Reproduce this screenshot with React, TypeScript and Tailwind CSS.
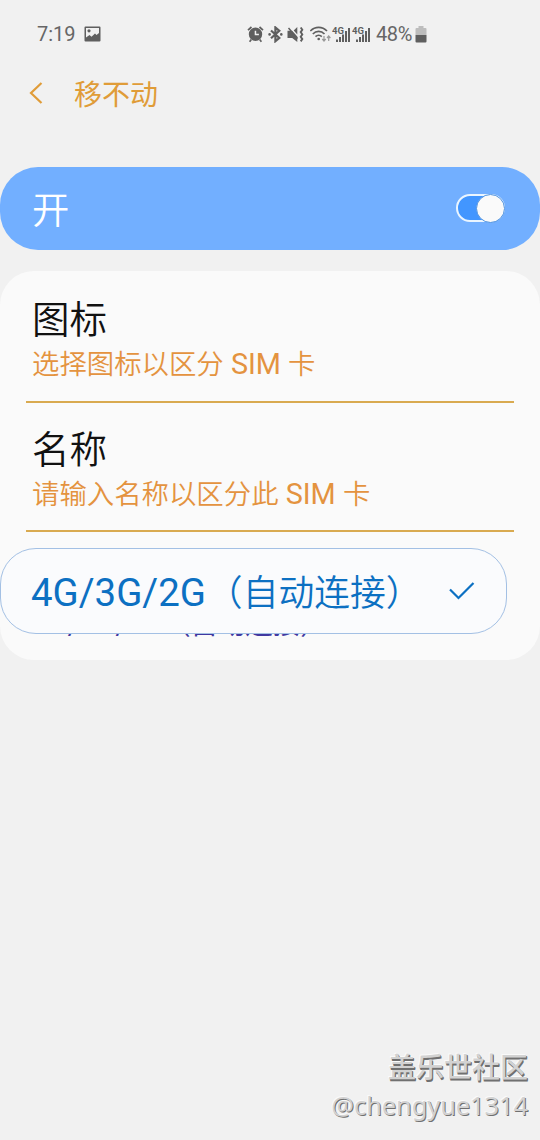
import React from "react";

function PictureIcon() {
  return (
    <svg className="block h-[16px] w-[17px]" viewBox="0 0 17 16">
      <path fill="#5f5f5f" fillRule="evenodd" d="M1.500 .5h14a1 1 0 0 1 1 1v13a1 1 0 0 1-1 1h-14a1 1 0 0 1-1-1v-13a1 1 0 0 1 1-1zM2 2v9.500l3.500-2.500 2 1.800L11 7.500l1.500 1.500L15 7V2z" />
      <circle cx="5" cy="4.800" r="1.600" fill="#5f5f5f" />
    </svg>
  );
}

function AlarmIcon() {
  return (
    <svg className="block h-[17px] w-[17px]" viewBox="0 0 17 17">
      <path fill="#5f5f5f" fillRule="evenodd" d="M8.500 1.500a6.700 6.700 0 1 1 0 13.400A6.700 6.700 0 0 1 8.500 1.500zM7.700 4.800v4.500h4.200V7.800H9.200v-3z" />
      <path fill="none" stroke="#5f5f5f" strokeWidth="1.700" d="M1 4.200 4.500 1M16 4.200 12.500 1M4.300 13.500 2.600 15.700M12.700 13.500l1.700 2.200" />
    </svg>
  );
}

function BluetoothIcon() {
  return (
    <svg className="block h-[17px] w-[15px]" viewBox="0 0 15 17">
      <path fill="none" stroke="#5f5f5f" strokeWidth="2.200" d="M3 4.500l8.300 7.500-3.900 3.200V1.500L11.300 4.800 3 12.300" />
      <circle cx="1.600" cy="8.400" r="1.300" fill="#5f5f5f" />
      <circle cx="13.300" cy="8.400" r="1.300" fill="#5f5f5f" />
    </svg>
  );
}

function MuteIcon() {
  return (
    <svg className="block h-[17px] w-[17px]" viewBox="0 0 17 17">
      <path fill="#5f5f5f" d="M.5 4.800h4.500L10.300 10.500v5.500L5.200 12H.5zM10.300 1v7.500L6.700 4.500z" />
      <path stroke="#5f5f5f" strokeWidth="1.500" fill="none" d="M1.500 2l9 10.500" />
      <path stroke="#5f5f5f" strokeWidth="1.900" fill="none" d="M13.700 1.500l1.600 2.300-1.600 2.300 1.600 2.400-1.600 2.300 1.600 2.300-1.600 2.300" />
    </svg>
  );
}

function WifiIcon() {
  return (
    <svg className="block h-[17px] w-[22px]" viewBox="0 0 22 17">
      <g fill="none" stroke="#5f5f5f" strokeWidth="1.600">
        <path d="M.3 5c4.700-4.800 12-4.800 16.700 0" />
        <path d="M2.800 8c3.300-3.500 8.400-3.500 11.700 0" />
        <path d="M5.500 10.600c1.800-1.900 4.500-1.900 6.300 0" />
      </g>
      <circle cx="8.700" cy="13" r="1.300" fill="#5f5f5f" />
      <path d="M14 10v5M12.300 13l1.700 2 1.700-2M18.700 15v-5M17 12l1.700-2 1.700 2" fill="none" stroke="#999" strokeWidth="1.200" />
    </svg>
  );
}

function SignalIcon() {
  return (
    <svg className="block h-[17px] w-[20px]" viewBox="0 0 20 17">
      <text x="0" y="7.500" fill="#5f5f5f" className="font-[Roboto] text-[9.500px] font-bold">4G</text>
      <path fill="#5f5f5f" d="M4 13.500h2V16H4zM7 11h2v5H7zM10 8.500h2V16h-2zM13 5h2v11h-2zM16 2h2v14h-2z" />
    </svg>
  );
}

function BatteryIcon() {
  return (
    <svg className="block h-[17px] w-[12px]" viewBox="0 0 12 17">
      <path fill="#bdbdbd" d="M3.500 0h5v2H10.500a1 1 0 0 1 1 1v6H.5V3a1 1 0 0 1 1-1h2z" />
      <path fill="#5f5f5f" d="M.5 9h11v6.500a1 1 0 0 1-1 1h-9a1 1 0 0 1-1-1z" />
    </svg>
  );
}

function StatusBar() {
  return (
    <div className="flex h-[68px] items-center pl-[37px] text-[#666]">
      <span className="w-[47px] text-[20px] leading-[20px]">7:19</span>
      <PictureIcon />
      <div className="ml-[146px] flex items-center">
        <AlarmIcon />
        <div className="ml-[4px]"><BluetoothIcon /></div>
        <div className="ml-[4px]"><MuteIcon /></div>
        <div className="ml-[6px]"><WifiIcon /></div>
        <SignalIcon />
        <SignalIcon />
        <span className="ml-[4px] w-[39px] whitespace-nowrap text-[20px] leading-[20px] tracking-[-0.4px]">48%</span>
        <BatteryIcon />
      </div>
    </div>
  );
}

function SettingRow({ title, before }: { title: string; before: string }) {
  return (
    <div className="mx-[26px] h-[129.500px] border-b-2 border-[#d9aa50] px-[6px] pt-[25px]">
      <div className="text-[37.500px] leading-[44px] font-[350] text-[#111]">{title}</div>
      <div className="mt-[5px] whitespace-nowrap text-[27.400px] leading-[36px] text-[#e4933f]">
        <span className="font-[350]">{before}</span>
        <span className="text-[28.800px] leading-[0]"> SIM </span>
        <span className="font-[350]">卡</span>
      </div>
    </div>
  );
}

export default function App() {
  return (
    <div className="flex h-[1140px] w-[540px] flex-col overflow-hidden bg-[#f1f1f1] font-['Roboto','Noto_Sans_CJK_SC',sans-serif]">
      <StatusBar />
      <header className="flex h-[52px] items-center pl-[28px] text-[#e09c38]">
        <svg className="-mt-[2px] h-[24px] w-[16px]" viewBox="0 0 16 24">
          <path d="M13.500 2 3 12l10.500 10" fill="none" stroke="currentColor" strokeWidth="2.200" />
        </svg>
        <h1 className="mt-[4px] ml-[30px] text-[28px] leading-[36px] font-normal">移不动</h1>
      </header>

      <section className="mt-[47px] flex h-[83px] shrink-0 items-center justify-between rounded-[38px] bg-[#72afff] pr-[35px] pl-[32px] text-white">
        <span className="mt-[5px] text-[37.300px] leading-[44px] font-[350]">开</span>
        <div className="-mt-[1px] flex h-[28px] w-[49px] items-center justify-end rounded-full border-2 border-[#eaf5ff] bg-[#4296ff]">
          <div className="-mr-[2px] h-[29px] w-[29px] shrink-0 rounded-full border border-[#4f93e0] bg-[#fafafa]" />
        </div>
      </section>

      <section className="relative mt-[21px] h-[389px] shrink-0 rounded-[34px] bg-[#fafafa] pt-[2px]">
        <SettingRow title="图标" before="选择图标以区分" />
        <SettingRow title="名称" before="请输入名称以区分此" />
        <div className="mt-[75px] pl-[32px] text-[27.400px] leading-[36px] text-[#4038a0]">
          <span className="text-[28.800px] leading-[0]">4G/3G/2G</span>
          <span>（自动连接）</span>
        </div>
        <div className="absolute top-[277px] left-0 flex h-[86px] w-[507px] items-center rounded-[36px] border border-[#a3c0e4] bg-[#fafbfd] pl-[30px] text-[#0c70c2]">
          <div className="mt-[6px] w-[418px] whitespace-nowrap text-[35.800px] leading-[44px]">
            <span className="text-[38.400px] leading-[0]">4G/3G/2G</span>
            <span className="ml-[1px] font-[350]">（自动连接）</span>
          </div>
          <svg className="h-[20px] w-[26px]" viewBox="0 0 26 20">
            <path d="M1 8.500 9.500 17 24.500 2" fill="none" stroke="currentColor" strokeWidth="2.200" />
          </svg>
        </div>
      </section>

      <footer className="mt-auto flex flex-col items-end pr-[12px] pb-[17px] text-[#d2d2d2]">
        <div className="-mb-[1px] text-[28px] leading-[38px] font-medium [text-shadow:1px_1px_0_#707070,1px_2px_0_#707070,-1px_-1px_0_#fafafa]">盖乐世社区</div>
        <div className="font-['Noto_Sans'] text-[25.300px] leading-[36px] text-[#d2d2d2] [text-shadow:1px_1px_0_#707070,-1px_-1px_0_#fafafa]">@chengyue1314</div>
      </footer>
    </div>
  );
}
